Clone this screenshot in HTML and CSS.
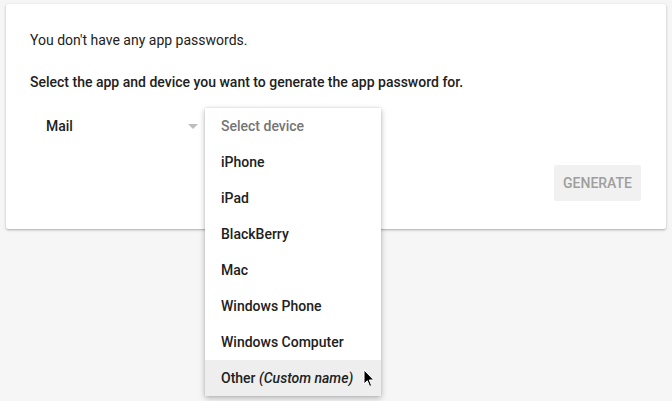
FILE: index.html
```html
<!DOCTYPE html>
<html>
<head>
<meta charset="utf-8">
<link rel="stylesheet" href="styles.css">
</head>
<body>
<div class="page">
  <div class="card">
    <p class="line">You don't have any app passwords.</p>
    <p class="line strong">Select the app and device you want to generate the app password for.</p>
    <div class="selects">
      <div class="select app">
        <span class="value">Mail</span>
        <span class="arrow"></span>
      </div>
      <div class="select device"></div>
    </div>
    <div class="actions">
      <button class="generate">GENERATE</button>
    </div>
  </div>
  <ul class="menu">
    <li class="item placeholder">Select device</li>
    <li class="item">iPhone</li>
    <li class="item">iPad</li>
    <li class="item">BlackBerry</li>
    <li class="item">Mac</li>
    <li class="item">Windows Phone</li>
    <li class="item">Windows Computer</li>
    <li class="item hover">Other <em>(Custom name)</em>
      <svg class="cursor" width="12" height="19" viewBox="0 0 12 19"><path d="M1 1 L1 15 L4.3 11.8 L6.6 17.4 L8.6 16.6 L6.3 11 L10.8 11 Z" fill="#000" stroke="#fff" stroke-width="1" stroke-linejoin="round"/></svg>
    </li>
  </ul>
</div>
</body>
</html>
```
FILE: styles.css
```css
html, body {
  margin: 0;
  padding: 0;
  background: #f6f6f6;
  font-family: Roboto, "Noto Sans", Arial, sans-serif;
  font-size: 14px;
  color: #212121;
}
.page {
  position: relative;
  height: 401px;
  padding: 4px 0 0 6px;
  box-sizing: border-box;
}
.card {
  width: 660px;
  height: 225px;
  box-sizing: border-box;
  padding: 26px 24px 28px;
  background: #fff;
  border-radius: 2px;
  box-shadow: 0 1px 3px rgba(0,0,0,0.25), 0 1px 1px rgba(0,0,0,0.08);
  display: flex;
  flex-direction: column;
}
.line {
  margin: 0;
  line-height: 20px;
}
.line + .line {
  margin-top: 22px;
}
.strong {
  font-weight: 500;
}
.selects {
  margin-top: 16px;
  display: flex;
  height: 36px;
}
.select {
  position: relative;
  height: 36px;
  display: flex;
  align-items: center;
}
.app {
  width: 175px;
  box-sizing: border-box;
  padding-left: 16px;
  font-weight: 500;
}
.app .arrow {
  position: absolute;
  left: 158px;
  top: 16px;
  width: 0;
  height: 0;
  border-left: 5px solid transparent;
  border-right: 5px solid transparent;
  border-top: 5px solid #bdbdbd;
}
.device {
  width: 176px;
}
.menu {
  position: absolute;
  left: 205px;
  top: 108px;
  width: 176px;
  margin: 0;
  padding: 0;
  list-style: none;
  background: #fff;
  z-index: 2;
  box-shadow: 0 2px 6px rgba(0,0,0,0.28), 0 0 2px rgba(0,0,0,0.1);
}
.item {
  position: relative;
  height: 36px;
  line-height: 36px;
  padding-left: 16px;
  font-weight: 500;
  color: #212121;
  white-space: nowrap;
}
.item.placeholder {
  color: #757575;
}
.item.hover {
  background: #eeeeee;
}
.item em {
  font-style: italic;
}
.cursor {
  position: absolute;
  left: 158px;
  top: 9px;
}
.actions {
  margin-top: 21px;
  display: flex;
  justify-content: flex-end;
  padding-right: 1px;
}
.generate {
  height: 36px;
  width: 87px;
  padding: 0;
  border: none;
  border-radius: 2px;
  background: #f1f1f1;
  color: #9e9e9e;
  font-family: Roboto, "Noto Sans", Arial, sans-serif;
  font-size: 14px;
  font-weight: 500;
}
```
